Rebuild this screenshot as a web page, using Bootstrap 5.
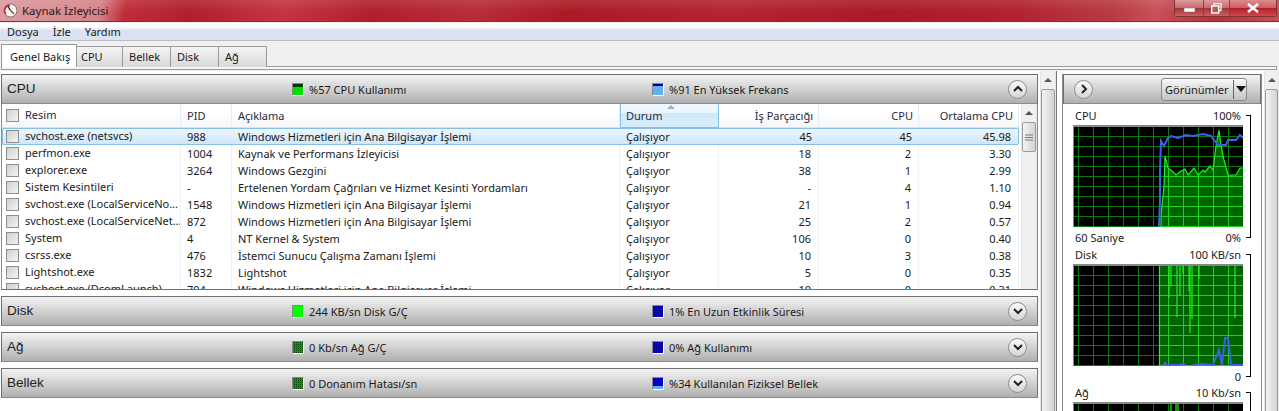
<!DOCTYPE html>
<html lang="tr">
<head>
    <meta charset="UTF-8" />
    <title>Kaynak İzleyicisi</title>
    <link href="https://cdn.jsdelivr.net/npm/bootstrap@5.3.3/dist/css/bootstrap.min.css" rel="stylesheet" />
    <style>
        html, body { height: 411px; overflow: hidden; }
        body { background: #f0f0f0; font-family: "Noto Sans", "Liberation Sans", sans-serif; font-size: 11px; color: #1a1a1a; line-height: 1; }

        .titlebar {
            height: 22px; border-bottom: 1px solid #6e3a3e;
            background:
                linear-gradient(to bottom, rgba(255,255,255,.1), rgba(255,255,255,0) 60%),
                linear-gradient(100deg, #dd9c9e 0, #d4838a 100px, #bf2c38 125px, #b0202b 190px, #c23540 280px, #b0202b 370px, #b82c36 470px, #aa1a25 560px, #b3242f 720px, #a91a26 870px, #b0222d 1000px, #b93a42 1100px, #c85058 1140px, #b83038 1200px, #c9555c 1279px);
            font-size: 11.5px; color: #2a1a1a; padding-left: 3px;
        }
        .winbtns { height: 17px; border: 1px solid #7c3338; border-top: 0; border-radius: 0 0 4px 4px; margin-right: 2px; }
        .winbtn { width: 29px; background: linear-gradient(to bottom, #dd9a9c, #c96a6e 50%, #a8333a 51%, #c46064); border-right: 1px solid #8a4045; }
        .winbtn.narrow { width: 26px; }
        .winbtn.wide { width: 46px; border-right: 0; background: linear-gradient(to bottom, #dc8c8e, #cc5c60 50%, #b41e28 51%, #d0484c); }
        .winbtn.low { padding-top: 4px; }

        .menubar { height: 18px; margin-top: 1px; background: linear-gradient(to bottom, #fff 0, #fff 20%, #dbe2f1 45%, #dbe2f1 100%); border-bottom: 1px solid #b9bcc2; gap: 14px; padding: 0 7px; }

        .tabstrip { height: 26px; padding: 3px 0 0 1px; }
        .tabbtn { width: 48px; height: 21px; margin-top: 2px; border: 1px solid #9a9a9a; border-left: 0; border-bottom: 0; padding: 4px 0 0 6px; background: linear-gradient(to bottom, #f4f4f4, #d8d8d8); }
        .tabbtn.on { width: 76px; height: 23px; margin-top: 0; background: #fff; position: relative; z-index: 1; padding: 6px 0 0 8px; border-left: 1px solid #9a9a9a; }
        .tabbtn.on + .tabbtn { width: 46px; padding-left: 4px; }
        .tabline { height: 4px; background: #f6f6f6; border: 1px solid #9a9a9a; margin: -1px 0 0 1px; width: 1276px; }

        .main { margin-top: 1px; background: #fff; height: 340px; }
        .leftcol { width: 1038px; flex: none; padding-left: 1px; margin-top: 3px; }
        .rightcol { width: 200px; flex: none; margin: 3px 0 0 5px; border-right: 1px solid #8a8a8a; border-left: 1px solid #8a8a8a; overflow: hidden; }
        .vsep { width: 1px; flex: none; background: #777; }

        .barhead {
            height: 30px; border: 1px solid #6f6f6f; border-bottom-color: #8a8a8a; position: relative;
            background: linear-gradient(to bottom, #f3f3f3 0, #dcdcdc 35%, #b0b0b0 100%);
        }
        .barname { width: 290px; padding-left: 5px; font-size: 13.5px; font-family: "Liberation Sans", sans-serif; color: #222; }
        .barmid { width: 360px; gap: 5px; }
        .barright { gap: 5px; }
        .swatch { width: 12px; height: 13px; border: 1px solid #fff; border-top-color: #888; border-left-color: #888; display: block; }
        .sw-green { background: #00ff00; }
        .sw-dgreen { background: conic-gradient(#004800 25%, #00a000 0) 0 0 / 2px 2px; }
        .sw-blue { background: conic-gradient(#0000a0 25%, #0000ff 0) 0 0 / 2px 2px; }
        .sw-sky { background: linear-gradient(to bottom, #000090 0, #000090 2px, #5eb0f5 2px); }
        .sw-part { background: linear-gradient(to bottom, #0000c8 0, #0000c8 8px, #5eb0f5 8px); }
        .sw-cpu { background: linear-gradient(to bottom, #003800 0, #003800 3px, #00e000 3px); }
        .roundbtn { width: 19px; height: 19px; border-radius: 50%; border: 1px solid #8e8e8e; background: linear-gradient(to bottom, #fafafa, #d5d5d5); margin-left: auto; margin-right: 10px; }
        .roundbtn.leftside { margin: 0 0 0 10px; }
        .gap-spacer { height: 6px; }

        .procpane { height: 186px; overflow: hidden; border-left: 1px solid #8a8a8a; border-bottom: 1px solid #6f6f6f; border-right: 1px solid #8a8a8a; }
        .proctable { width: 1017px; table-layout: fixed; border-collapse: separate; border-spacing: 0; flex: none; align-self: flex-start; }
        .proctable th { height: 24px; font-weight: 400; padding: 0 5px 0 6px; border-right: 1px solid #e4ecf5; background: linear-gradient(to bottom, #fff, #fff 40%, #f5f6f8); white-space: nowrap; border-bottom: 1px solid #dde3ec; vertical-align: middle; position: relative; color: #2a2a3a; }
        .proctable th.sorted { background: linear-gradient(to bottom, #f0f8ff, #eaf5fd 40%, #cfe8fa 41%, #d9eefc); border: 1px solid #86c0e6; border-top: 0; padding-left: 5px; }
        .sortmark { position: absolute; left: 46px; top: 1px; width: 0; height: 0; border-left: 4px solid transparent; border-right: 4px solid transparent; border-bottom: 4px solid #8fb5d6; }
        .proctable td { height: 17px; padding: 0 7px 0 6px; white-space: nowrap; overflow: hidden; border-right: 1px solid #eef2f8; vertical-align: middle; }
        .proctable tr.sel td { background: linear-gradient(to bottom, #eef6fd, #cfe6fa); border-top: 1px solid #86c0e6; border-bottom: 1px solid #86c0e6; border-right: 0; }
        .proctable tr.sel td:first-child { border-left: 1px solid #86c0e6; border-radius: 2px 0 0 2px; padding-left: 3px !important; }
        .proctable tr.sel td:last-child { border-right: 1px solid #86c0e6; border-radius: 0 2px 2px 0; }
        .chk { width: 13px; height: 13px; border: 1px solid #8d8d8d; background: linear-gradient(135deg, #d0d0d0, #f4f4f4); display: inline-block; vertical-align: -3px; margin-right: 6px; }
        .firstcell { padding-left: 4px !important; }

        .sbar { width: 16px; flex: none; background: #f0f0f0; border-left: 1px solid #e6e6e6; border-right: 1px solid #e6e6e6; position: relative; margin-left: 2px; }
        .sbar.last { width: 15px; }
        .sbtn { height: 18px; overflow: hidden; }
        .sup { width: 0; height: 0; border-left: 4px solid transparent; border-right: 4px solid transparent; border-bottom: 4px solid #555; margin: 7px auto 0; }
        .sthumb { height: 30px; border: 1px solid #9a9a9a; border-radius: 2px; background: linear-gradient(to right, #f3f3f3, #d4d4d4); }
        .outerbar .sthumb { height: 340px; }

        .viewsbtn { width: 86px; height: 23px; border: 1px solid #8a8a8a; border-radius: 3px; background: linear-gradient(to bottom, #fafafa, #dcdcdc 50%, #c4c4c4); margin-left: auto; margin-right: 13px; padding: 0 0 0 3px; }
        .viewsbtn i { width: 0; height: 0; border-left: 5px solid transparent; border-right: 5px solid transparent; border-top: 6px solid #111; display: block; }
        .viewsep { width: 1px; height: 19px; background: #666; margin: 0 2px 0 5px; }
        .graphbody { padding: 4px 0 0 10px; }
        .graphlab { width: 170px; height: 14px; padding: 0 2px; position: relative; align-items: center; }
        .graphlab::after { content: ""; position: absolute; left: 173px; width: 5px; border-top: 1px solid #000; top: 7px; }
        .graphlab.foot { margin: 3px 0 3px; }
        .graphlab.foot.tight { margin-bottom: 2px; }
        .graphbox { width: 170px; height: 100px; display: block; }
        .chartwrap { position: relative; width: 170px; border-top: 2px solid #888; margin-top: 3px; }
        .chartwrap::after { content: ""; position: absolute; left: 177px; width: 0; top: -12px; bottom: -11px; border-right: 1px solid #000; }
    </style>
</head>
<body>

<!-- title bar -->
<div class="titlebar d-flex align-items-center">
    <svg width="15" height="15" viewBox="0 0 15 15" class="me-1">
        <circle cx="7.5" cy="7.5" r="6.5" fill="#f4f4f4" stroke="#7a7a7a"/>
        <path d="M3 11 A5 5 0 0 1 7 2.6" fill="none" stroke="#c03030" stroke-width="1.6"/>
        <path d="M7.5 7.5 L5 3.5" stroke="#222" stroke-width="1.4"/>
        <path d="M7.5 7.5 L11 11" stroke="#c03030" stroke-width="1.4"/>
    </svg>
    <span>Kaynak İzleyicisi</span>
    <div class="winbtns d-flex ms-auto align-self-start">
        <div class="winbtn low d-flex align-items-center justify-content-center">
            <svg width="11" height="4"><rect x="0" y="0" width="11" height="4" fill="#fff" stroke="#666" stroke-width=".5"/></svg>
        </div>
        <div class="winbtn narrow d-flex align-items-center justify-content-center">
            <svg width="11" height="11"><rect x="3" y="0.5" width="7" height="7" fill="none" stroke="#eee" stroke-width="1.4"/><rect x="0.7" y="3" width="7" height="7" fill="#b65a60" stroke="#fff" stroke-width="1.4"/></svg>
        </div>
        <div class="winbtn wide d-flex align-items-center justify-content-center">
            <svg width="12" height="10"><path d="M1 1 L11 9 M11 1 L1 9" stroke="#fff" stroke-width="2.6"/></svg>
        </div>
    </div>
</div>

<!-- menu -->
<div class="menubar d-flex align-items-center">
    <span>Dosya</span><span>İzle</span><span>Yardım</span>
</div>

<!-- tabs -->
<div class="tabstrip d-flex">
    <div class="tabbtn on">Genel Bakış</div>
    <div class="tabbtn">CPU</div>
    <div class="tabbtn">Bellek</div>
    <div class="tabbtn">Disk</div>
    <div class="tabbtn">Ağ</div>
</div>
<div class="tabline"></div>

<div class="main d-flex">
    <div class="leftcol">
        <div class="barhead d-flex align-items-center">
            <div class="barname">CPU</div>
            <div class="barmid d-flex align-items-center"><span class="swatch sw-cpu"></span><span>%57 CPU Kullanımı</span></div>
            <div class="barright d-flex align-items-center"><span class="swatch sw-sky"></span><span>%91 En Yüksek Frekans</span></div>
            <div class="roundbtn d-flex align-items-center justify-content-center">
                <svg width="10" height="8"><path d="M1 6 L5 2 L9 6" fill="none" stroke="#222" stroke-width="2"/></svg>
            </div>
        </div>
        <div class="procpane d-flex">
            <table class="proctable">
                <colgroup id="cols"></colgroup>
                <thead>
                <tr>
                    <th class="firstcell"><span class="chk"></span>Resim</th>
                    <th>PID</th>
                    <th>Açıklama</th>
                    <th class="sorted"><span class="sortmark"></span>Durum</th>
                    <th class="text-end">İş Parçacığı</th>
                    <th class="text-end">CPU</th>
                    <th class="text-end">Ortalama CPU</th>
                </tr>
                </thead>
                <tbody id="procBody"></tbody>
            </table>
            <div class="sbar">
                <div class="sbtn"><div class="sup"></div></div>
                <div class="sthumb d-flex align-items-center justify-content-center">
                    <svg width="8" height="7"><path d="M0 1 H8 M0 3.5 H8 M0 6 H8" stroke="#777"/></svg>
                </div>
            </div>
        </div>
        <div class="gap-spacer"></div>

        <div class="barhead d-flex align-items-center">
            <div class="barname">Disk</div>
            <div class="barmid d-flex align-items-center"><span class="swatch sw-green"></span><span>244 KB/sn Disk G/Ç</span></div>
            <div class="barright d-flex align-items-center"><span class="swatch sw-blue"></span><span>1% En Uzun Etkinlik Süresi</span></div>
            <div class="roundbtn d-flex align-items-center justify-content-center">
                <svg width="10" height="8"><path d="M1 2 L5 6 L9 2" fill="none" stroke="#222" stroke-width="2"/></svg>
            </div>
        </div>
        <div class="gap-spacer"></div>
        <div class="barhead d-flex align-items-center">
            <div class="barname">Ağ</div>
            <div class="barmid d-flex align-items-center"><span class="swatch sw-dgreen"></span><span>0 Kb/sn Ağ G/Ç</span></div>
            <div class="barright d-flex align-items-center"><span class="swatch sw-blue"></span><span>0% Ağ Kullanımı</span></div>
            <div class="roundbtn d-flex align-items-center justify-content-center">
                <svg width="10" height="8"><path d="M1 2 L5 6 L9 2" fill="none" stroke="#222" stroke-width="2"/></svg>
            </div>
        </div>
        <div class="gap-spacer"></div>
        <div class="barhead d-flex align-items-center">
            <div class="barname">Bellek</div>
            <div class="barmid d-flex align-items-center"><span class="swatch sw-dgreen"></span><span>0 Donanım Hatası/sn</span></div>
            <div class="barright d-flex align-items-center"><span class="swatch sw-part"></span><span>%34 Kullanılan Fiziksel Bellek</span></div>
            <div class="roundbtn d-flex align-items-center justify-content-center">
                <svg width="10" height="8"><path d="M1 2 L5 6 L9 2" fill="none" stroke="#222" stroke-width="2"/></svg>
            </div>
        </div>
    </div>

    <div class="sbar outerbar">
        <div class="sbtn"><div class="sup"></div></div>
        <div class="sthumb"></div>
    </div>
    <div class="vsep"></div>

    <div class="rightcol">
        <div class="barhead d-flex align-items-center">
            <div class="roundbtn leftside d-flex align-items-center justify-content-center">
                <svg width="8" height="10"><path d="M2 1 L6 5 L2 9" fill="none" stroke="#222" stroke-width="2"/></svg>
            </div>
            <div class="viewsbtn d-flex align-items-center">
                <span>Görünümler</span><span class="viewsep"></span><i></i>
            </div>
        </div>
        <div class="graphbody">
            <div class="graphlab d-flex justify-content-between"><span>CPU</span><span>100%</span></div>
            <div class="chartwrap"><svg class="graphbox" id="cpuChart" viewBox="0 2 170 100"></svg></div>
            <div class="graphlab foot d-flex justify-content-between"><span>60 Saniye</span><span>0%</span></div>
            <div class="graphlab d-flex justify-content-between"><span>Disk</span><span>100 KB/sn</span></div>
            <div class="chartwrap"><svg class="graphbox" id="diskChart" viewBox="0 2 170 100"></svg></div>
            <div class="graphlab foot tight d-flex justify-content-end"><span>0</span></div>
            <div class="graphlab d-flex justify-content-between"><span>Ağ</span><span>10 Kb/sn</span></div>
            <div class="chartwrap"><svg class="graphbox" id="netChart" viewBox="0 2 170 100"></svg></div>
        </div>
    </div>

    <div class="sbar outerbar last">
        <div class="sbtn"><div class="sup"></div></div>
        <div class="sthumb"></div>
    </div>
</div>

<script>
    const colWidths = [179, 51, 388, 99, 100, 100, 100];
    document.getElementById("cols").innerHTML = colWidths.map(w => `<col style="width:${w}px">`).join("");

    const rows = [
        ["svchost.exe (netsvcs)", "988", "Windows Hizmetleri için Ana Bilgisayar İşlemi", "45", "45", "45.98"],
        ["perfmon.exe", "1004", "Kaynak ve Performans İzleyicisi", "18", "2", "3.30"],
        ["explorer.exe", "3264", "Windows Gezgini", "38", "1", "2.99"],
        ["Sistem Kesintileri", "-", "Ertelenen Yordam Çağrıları ve Hizmet Kesinti Yordamları", "-", "4", "1.10"],
        ["svchost.exe (LocalServiceNo...", "1548", "Windows Hizmetleri için Ana Bilgisayar İşlemi", "21", "1", "0.94"],
        ["svchost.exe (LocalServiceNet...", "872", "Windows Hizmetleri için Ana Bilgisayar İşlemi", "25", "2", "0.57"],
        ["System", "4", "NT Kernel & System", "106", "0", "0.40"],
        ["csrss.exe", "476", "İstemci Sunucu Çalışma Zamanı İşlemi", "10", "3", "0.38"],
        ["Lightshot.exe", "1832", "Lightshot", "5", "0", "0.35"],
        ["svchost.exe (DcomLaunch)", "704", "Windows Hizmetleri için Ana Bilgisayar İşlemi", "10", "0", "0.31"]
    ];

    const procBody = document.getElementById("procBody");
    rows.forEach((r, i) => {
        const tr = document.createElement("tr");
        if (i === 0) tr.className = "sel";
        tr.innerHTML = `<td class="firstcell"><span class="chk"></span></td><td></td><td></td><td>Çalışıyor</td>` +
            `<td class="text-end"></td><td class="text-end"></td><td class="text-end"></td>`;
        const cells = tr.children;
        cells[0].append(r[0]);
        cells[1].textContent = r[1];
        cells[2].textContent = r[2];
        cells[4].textContent = r[3];
        cells[5].textContent = r[4];
        cells[6].textContent = r[5];
        procBody.appendChild(tr);
    });

    // grid lines of the perfmon graphs, 15px across and 10px down
    function gridLines(colour) {
        let out = "";
        for (let x = 5; x < 170; x += 15) out += `<path d="M${x + .5} 0 V102" stroke="${colour}"/>`;
        for (let y = 11; y < 102; y += 10) out += `<path d="M0 ${y + .5} H170" stroke="${colour}"/>`;
        return out;
    }
    const edge = `<path d="M.5 0 V102" stroke="#888"/>`;

    const cpuGreen = "88,102 88,91 91,61 92,31 95,43 98,45 103,50 108,46 112,44 115,50 121,43 125,50 130,45 132,47 137,41 140,45 143,21 146,5 148,21 151,35 155,50 163,50 167,43 170,43";
    const cpuBlue = "86,102 87,75 87,45 88,16 91,21 95,13 98,11 105,13 113,10 120,11 130,9 138,11 145,20 153,20 155,15 163,15 167,10 170,13";
    document.getElementById("cpuChart").innerHTML =
        `<rect width="170" height="102" fill="#000"/>` + gridLines("#0a7a0a") +
        `<polygon points="${cpuGreen} 170,102" fill="#006400"/>` +
        `<clipPath id="c1"><polygon points="${cpuGreen} 170,102"/></clipPath>` +
        `<g clip-path="url(#c1)">${gridLines("#1fd01f")}</g>` +
        `<polyline points="${cpuGreen}" fill="none" stroke="#22ee22" stroke-width="1.2"/>` +
        `<polyline points="${cpuBlue}" fill="none" stroke="#3a62e8" stroke-width="2"/>` + edge;

    const spikes = [[96, 34], [98, 22], [104, 53], [107, 32], [110, 10], [116, 27], [117, 69], [119, 55], [126, 15], [162, 54]];
    const diskBlue = "120,101 128,100 140,101 146,86 149,101 152,74 155,74 158,101 170,101";
    document.getElementById("diskChart").innerHTML =
        `<rect width="170" height="102" fill="#000"/>` + gridLines("#0a7a0a") +
        `<rect x="86" width="84" height="102" fill="#006400"/>` +
        `<clipPath id="c2"><rect x="86" width="84" height="102"/></clipPath>` +
        `<g clip-path="url(#c2)">${gridLines("#1fd01f")}</g>` +
        `<path d="M86.5 0 V102" stroke="#22ee22" stroke-width="1.2"/>` +
        spikes.map(s => `<path d="M${s[0]} 0 V${s[1]}" stroke="#22ee22" stroke-width="1.2"/>`).join("") +
        `<polyline points="90,101 92,99 94,101 105,101 110,100 113,101" fill="none" stroke="#3a62e8" stroke-width="2"/>` +
        `<polyline points="${diskBlue}" fill="none" stroke="#3a62e8" stroke-width="2"/>` + edge;

    document.getElementById("netChart").innerHTML =
        `<rect width="170" height="102" fill="#000"/>` + gridLines("#0a7a0a") +
        `<path d="M98 0 V12 M103 0 V12 M105 0 V12" stroke="#22ee22" stroke-width="1.2"/>` + edge;
</script>
</body>
</html>
